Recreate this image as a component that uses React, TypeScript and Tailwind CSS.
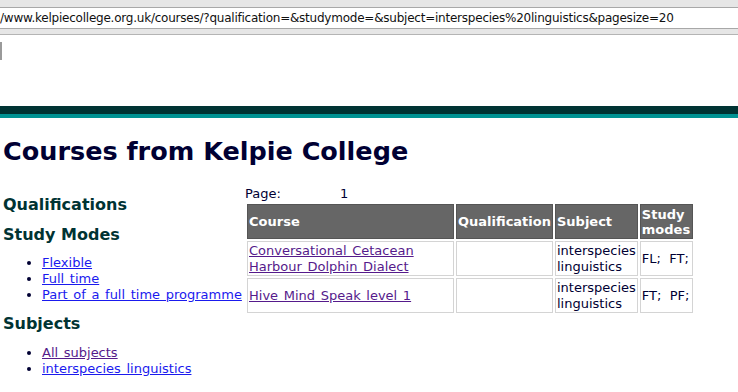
import React from "react";

const courses = [
  { name: ["Conversational Cetacean", "Harbour Dolphin Dialect"], subject: ["interspecies", "linguistics"], modes: "FL;\u00a0 FT;" },
  { name: ["Hive Mind Speak level 1"], subject: ["interspecies", "linguistics"], modes: "FT;\u00a0 PF;" },
];

export default function App() {
  return (
    <div className="w-[738px] h-[392px] overflow-hidden bg-white font-['DejaVu_Sans',Verdana,sans-serif] text-[13px] text-[#000033] [word-spacing:1.5px]">
      {/* browser address bar */}
      <div className="h-[35px] bg-[#e6e6e6] border-b border-[#b4b4b4] pt-[7px]">
        <div className="h-[22px] bg-white border-y border-[#a8a8a8] text-[12px] leading-[20px] text-[#111] whitespace-nowrap tracking-[-0.23px] [word-spacing:0px]">
          /www.kelpiecollege.org.uk/courses/?qualification=&amp;studymode=&amp;subject=interspecies%20linguistics&amp;pagesize=20
        </div>
      </div>
      <div className="h-[71px] pt-[7px]">
        <div className="w-[2px] h-[18px] bg-[#9a9a9a]" />
      </div>
      <div className="h-[8px] bg-[#003333]" />
      <div className="h-[4px] bg-[#009393]" />

      <h1 className="mt-[17px] ml-[3px] text-[25.5px] leading-[32px] font-bold text-[#000033] whitespace-nowrap [word-spacing:0px]">
        Courses from Kelpie College
      </h1>

      <div className="flex mt-[19px]">
        <div className="w-[245px] shrink-0 pl-[3px] pt-[9px]">
          <h2 className="text-[16px] leading-[20px] font-bold text-[#003333] [word-spacing:0px]">Qualifications</h2>
          <h2 className="mt-[10px] text-[16px] leading-[20px] font-bold text-[#003333] [word-spacing:0px]">Study Modes</h2>
          <ul className="mt-[10px] pl-[39px] list-disc leading-[16px] whitespace-nowrap">
            <li><a className="underline text-[#1a1aee]">Flexible</a></li>
            <li><a className="underline text-[#1a1aee]">Full time</a></li>
            <li><a className="underline text-[#1a1aee]">Part of a full time programme</a></li>
          </ul>
          <h2 className="mt-[11px] text-[16px] leading-[20px] font-bold text-[#003333]">Subjects</h2>
          <ul className="mt-[11px] pl-[39px] list-disc leading-[16px] whitespace-nowrap">
            <li><a className="underline text-[#551a8b]">All subjects</a></li>
            <li><a className="underline text-[#1a1aee]">interspecies linguistics</a></li>
          </ul>
        </div>

        <div className="flex flex-col">
          <div className="flex leading-[16px]">
            <span className="w-[95px]">Page:</span>
            <span>1</span>
          </div>
          <table className="border-separate border-spacing-[2px]">
            <thead>
              <tr className="text-white font-bold text-left leading-[15px] [word-spacing:0px]">
                <th className="w-[207px] h-[35px] bg-[#666666] border border-[#555] px-[1px] align-middle">Course</th>
                <th className="w-[95px] bg-[#666666] border border-[#555] px-[1px] align-middle">Qualification</th>
                <th className="w-[82px] bg-[#666666] border border-[#555] px-[1px] align-middle">Subject</th>
                <th className="w-[53px] bg-[#666666] border border-[#555] px-[1px] align-middle">Study<br />modes</th>
              </tr>
            </thead>
            <tbody>
              {courses.map((c, i) => (
                <tr key={i} className="leading-[16px]">
                  <td className="h-[35px] border border-[#d4d4d4] px-[1px] align-middle">
                    <a className="underline text-[#551a8b]">
                      {c.name.map((n, j) => (
                        <React.Fragment key={j}>{j > 0 && <br />}{n}</React.Fragment>
                      ))}
                    </a>
                  </td>
                  <td className="border border-[#d4d4d4]" />
                  <td className="border border-[#d4d4d4] px-[1px] align-middle">
                    {c.subject[0]}<br />{c.subject[1]}
                  </td>
                  <td className="border border-[#d4d4d4] px-[1px] align-middle whitespace-nowrap [word-spacing:0px]">{c.modes}</td>
                </tr>
              ))}
            </tbody>
          </table>
        </div>
      </div>
    </div>
  );
}
